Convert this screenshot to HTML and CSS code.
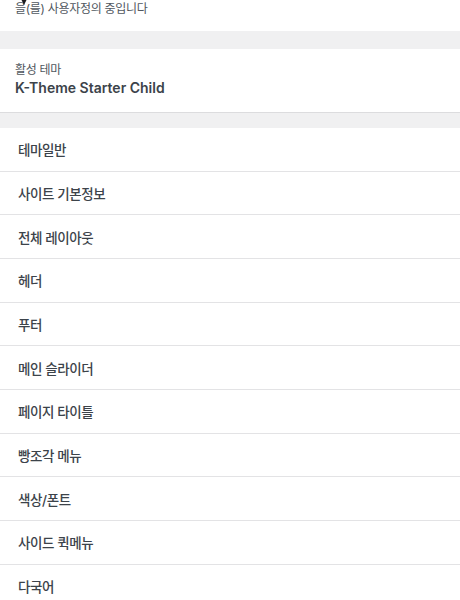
FILE: index.html
```html
<!DOCTYPE html>
<html lang="ko">
<head>
<meta charset="utf-8">
<link rel="stylesheet" href="styles.css">
</head>
<body>
<div class="panel">
  <div class="top">
    <span class="cursor"><svg width="6" height="6" viewBox="0 0 6 6"><path d="M0 0 H6 L3 6 Z" fill="#1d1d1f"/></svg></span>
    <p class="customizing">을(를) 사용자정의 중입니다</p>
  </div>
  <div class="gap"></div>
  <div class="theme">
    <div class="theme-label">활성 테마</div>
    <div class="theme-name">K-Theme Starter Child</div>
  </div>
  <div class="gap gap2"></div>
  <ul class="menu">
    <li class="item">테마일반</li>
    <li class="item">사이트 기본정보</li>
    <li class="item">전체 레이아웃</li>
    <li class="item">헤더</li>
    <li class="item">푸터</li>
    <li class="item">메인 슬라이더</li>
    <li class="item">페이지 타이틀</li>
    <li class="item">빵조각 메뉴</li>
    <li class="item">색상/폰트</li>
    <li class="item">사이드 퀵메뉴</li>
    <li class="item">다국어</li>
  </ul>
</div>
</body>
</html>
```
FILE: styles.css
```css
* { box-sizing: border-box; }
html, body { margin: 0; padding: 0; background: #fff; }
body {
  font-family: Inter, "Noto Sans CJK KR", sans-serif;
  color: #3c434a;
  width: 460px;
  height: 600px;
  overflow: hidden;
}
.panel { display: flex; flex-direction: column; }
.top {
  position: relative;
  height: 31px;
  background: #fff;
  padding-left: 15px;
}
.cursor { position: absolute; left: 21px; top: -1px; line-height: 0; }
.customizing {
  margin: 0;
  font-size: 12px;
  line-height: 18px;
  color: #50575e;
  letter-spacing: -0.3px;
}
.gap { height: 18px; background: #f0f0f1; }
.gap2 { height: 15px; }
.theme {
  background: #fff;
  height: 64px;
  border-bottom: 1px solid #dcdcde;
  padding: 13px 15px 0;
}
.theme-label {
  font-size: 12px;
  line-height: 16px;
  color: #50575e;
  letter-spacing: -0.3px;
}
.theme-name {
  font-size: 14px;
  line-height: 20px;
  font-weight: 600;
  color: #3c434a;
}
.menu { list-style: none; margin: 0; padding: 0; }
.item {
  height: 43.67px;
  border-bottom: 1px solid #e3e3e5;
  display: flex;
  align-items: center;
  padding-left: 18px;
  font-size: 13.5px;
  font-weight: 500;
  color: #3c434a;
  letter-spacing: -0.4px;
}
```
